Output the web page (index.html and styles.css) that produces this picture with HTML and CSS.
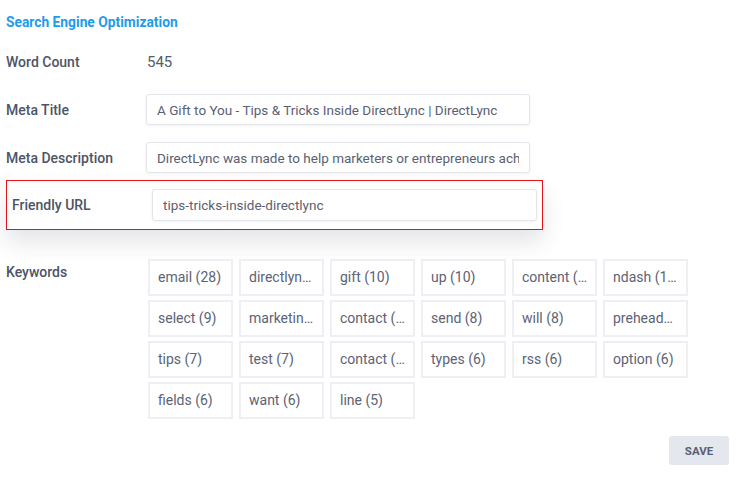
FILE: index.html
```html
<!DOCTYPE html>
<html lang="en">
<head>
    <meta charset="UTF-8">
    <title>Search Engine Optimization</title>
    <link rel="stylesheet" href="styles.css">
</head>
<body>
    <div class="seo-panel">
        <h3 class="seo-title">Search Engine Optimization</h3>

        <div class="seo-row">
            <label class="seo-label">Word Count</label>
            <div class="seo-value">545</div>
        </div>

        <div class="seo-row">
            <label class="seo-label" for="metaTitle">Meta Title</label>
            <input class="seo-input" id="metaTitle" type="text" value="A Gift to You - Tips &amp; Tricks Inside DirectLync | DirectLync">
        </div>

        <div class="seo-row">
            <label class="seo-label" for="metaDesc">Meta Description</label>
            <input class="seo-input" id="metaDesc" type="text" value="DirectLync was made to help marketers or entrepreneurs achieve their goals">
        </div>

        <div class="seo-row highlight">
            <label class="seo-label" for="friendlyUrl">Friendly URL</label>
            <input class="seo-input" id="friendlyUrl" type="text" value="tips-tricks-inside-directlync">
        </div>

        <div class="seo-row keywords-row">
            <label class="seo-label">Keywords</label>
            <div class="keyword-grid">
                <div class="keyword">email (28)</div>
                <div class="keyword">directlync (12)</div>
                <div class="keyword">gift (10)</div>
                <div class="keyword">up (10)</div>
                <div class="keyword">content (10)</div>
                <div class="keyword">ndash (10)</div>
                <div class="keyword">select (9)</div>
                <div class="keyword">marketing (9)</div>
                <div class="keyword">contact (8)</div>
                <div class="keyword">send (8)</div>
                <div class="keyword">will (8)</div>
                <div class="keyword">preheader (7)</div>
                <div class="keyword">tips (7)</div>
                <div class="keyword">test (7)</div>
                <div class="keyword">contact (7)</div>
                <div class="keyword">types (6)</div>
                <div class="keyword">rss (6)</div>
                <div class="keyword">option (6)</div>
                <div class="keyword">fields (6)</div>
                <div class="keyword">want (6)</div>
                <div class="keyword">line (5)</div>
            </div>
        </div>

        <div class="actions">
            <button type="button" class="save-btn">SAVE</button>
        </div>
    </div>
</body>
</html>
```

FILE: styles.css
```css
body {
    margin: 0;
    background: #fff;
    font-family: Roboto, "Liberation Sans", sans-serif;
    color: #4a5163;
}

.seo-panel {
    padding: 13px 11px 0 6px;
}

.seo-title {
    margin: 0 0 15px 0;
    font-size: 13.8px;
    font-weight: 700;
    color: #1e9be9;
    line-height: 18px;
}

.seo-row {
    display: flex;
    align-items: center;
    height: 31px;
    margin-bottom: 17px;
}

.seo-label {
    width: 140px;
    flex: none;
    font-size: 14px;
    font-weight: 500;
    color: #4d5466;
}

.seo-value {
    font-size: 15px;
    color: #545b6c;
    padding-left: 1px;
}

.seo-input {
    width: 384px;
    height: 31px;
    box-sizing: border-box;
    border: 1px solid #e3e5ea;
    border-radius: 3px;
    padding: 0 10px;
    font-family: Roboto, "Liberation Sans", sans-serif;
    font-size: 13.5px;
    color: #5a6172;
    box-shadow: 0 1px 3px rgba(30, 40, 60, 0.06);
    outline: none;
}

/* friendly url row, boxed in red */
.highlight {
    height: 32px;
    width: 525px;
    margin-top: -10px;
    margin-bottom: 29px;
    padding: 8px 5px 8px 5px;
    border: 1px solid #e5141b;
    background: #fff;
    box-shadow: 0 12px 22px rgba(40, 50, 70, 0.13);
}

.highlight .seo-input {
    height: 32px;
    width: 385px;
}

.keywords-row {
    height: auto;
    align-items: flex-start;
}

.keywords-row .seo-label {
    padding-top: 5px;
    width: 142px;
}

.keyword-grid {
    display: grid;
    grid-template-columns: repeat(6, 85px);
    column-gap: 6px;
    row-gap: 4px;
}

.keyword {
    height: 37px;
    box-sizing: border-box;
    border: 2px solid #edeff2;
    padding: 0 8px;
    line-height: 33px;
    font-size: 14px;
    color: #5c6374;
    white-space: nowrap;
    overflow: hidden;
    text-overflow: ellipsis;
}

.actions {
    display: flex;
    justify-content: flex-end;
}

.save-btn {
    width: 60px;
    height: 29px;
    border: none;
    border-radius: 3px;
    background-color: #e4e7ee;
    color: #596074;
    font-family: Roboto, "Liberation Sans", sans-serif;
    font-size: 11.5px;
    font-weight: 700;
    cursor: pointer;
}
```
